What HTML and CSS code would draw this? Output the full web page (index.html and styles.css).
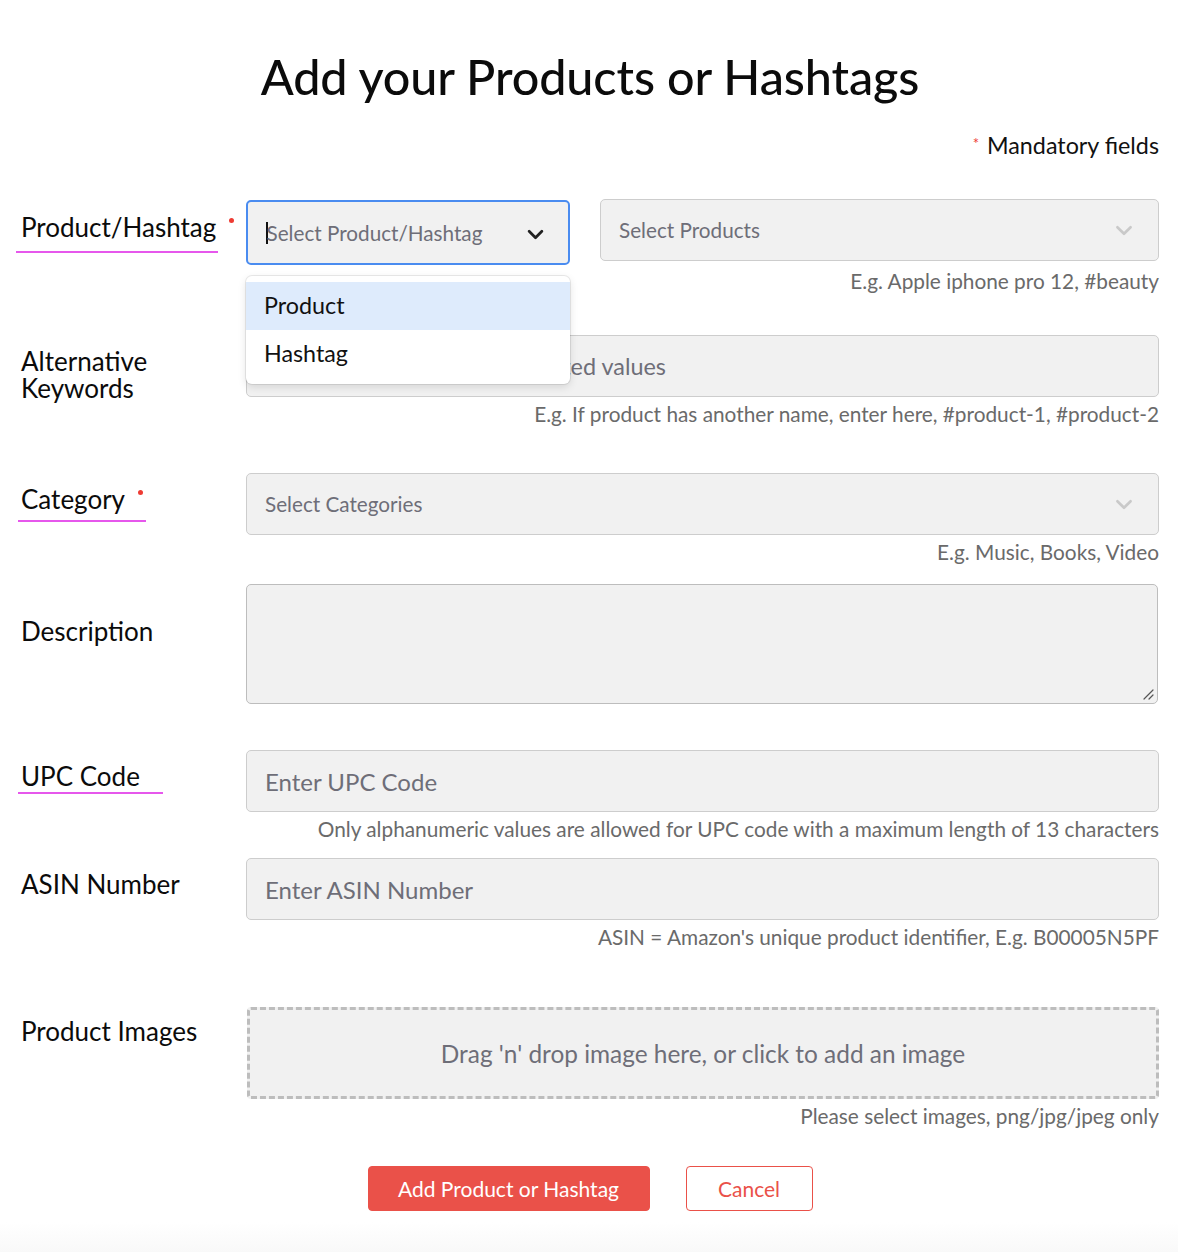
FILE: index.html
```html
<!DOCTYPE html>
<html lang="en">
<head>
<meta charset="utf-8">
<title>Add your Products or Hashtags</title>
<link rel="stylesheet" href="styles.css">
</head>
<body>
<main class="page">
  <h1 class="title">Add your Products or Hashtags</h1>
  <p class="mandatory"><span class="star">*</span> Mandatory fields</p>

  <div class="row row-product">
    <div class="label"><span class="lbl lbl-product">Product/Hashtag<i class="dot"></i></span></div>
    <div class="field">
      <div class="pair">
        <div class="select-wrap">
          <div class="select focused">
            <span class="caret"></span><span class="ph">Select Product/Hashtag</span>
            <svg class="chev dark" viewBox="0 0 16 10" width="17" height="11"><path d="M2 2l6 6 6-6" fill="none" stroke="#222" stroke-width="2.6" stroke-linecap="round" stroke-linejoin="round"/></svg>
          </div>
          <ul class="menu">
            <li class="opt active">Product</li>
            <li class="opt">Hashtag</li>
          </ul>
        </div>
        <div class="select second">
          <span class="ph">Select Products</span>
          <svg class="chev" viewBox="0 0 16 10" width="18" height="11"><path d="M2 2l6 6 6-6" fill="none" stroke="#c9c9c9" stroke-width="2.4" stroke-linecap="round" stroke-linejoin="round"/></svg>
        </div>
      </div>
      <p class="hint hint-first">E.g. Apple iphone pro 12, #beauty</p>
    </div>
  </div>

  <div class="row row-alt">
    <div class="label"><span class="lbl two-line">Alternative<br>Keywords</span></div>
    <div class="field">
      <div class="input"><span class="ph big alt">Enter multiple comma separated values</span></div>
      <p class="hint">E.g. If product has another name, enter here, #product-1, #product-2</p>
    </div>
  </div>

  <div class="row row-cat">
    <div class="label"><span class="lbl lbl-cat">Category<i class="dot"></i></span></div>
    <div class="field">
      <div class="select">
        <span class="ph">Select Categories</span>
        <svg class="chev" viewBox="0 0 16 10" width="18" height="11"><path d="M2 2l6 6 6-6" fill="none" stroke="#c9c9c9" stroke-width="2.4" stroke-linecap="round" stroke-linejoin="round"/></svg>
      </div>
      <p class="hint">E.g. Music, Books, Video</p>
    </div>
  </div>

  <div class="row row-desc">
    <div class="label"><span class="lbl">Description</span></div>
    <div class="field">
      <div class="textarea">
        <svg class="grip" viewBox="0 0 12 12" width="12" height="12"><path d="M11 2L2 11M11 7L7 11" stroke="#555" stroke-width="1.2" stroke-linecap="round"/></svg>
      </div>
    </div>
  </div>

  <div class="row row-upc">
    <div class="label"><span class="lbl lbl-upc">UPC Code</span></div>
    <div class="field">
      <div class="input"><span class="ph big">Enter UPC Code</span></div>
      <p class="hint">Only alphanumeric values are allowed for UPC code with a maximum length of 13 characters</p>
    </div>
  </div>

  <div class="row row-asin">
    <div class="label"><span class="lbl">ASIN Number</span></div>
    <div class="field">
      <div class="input"><span class="ph big">Enter ASIN Number</span></div>
      <p class="hint">ASIN = Amazon's unique product identifier, E.g. B00005N5PF</p>
    </div>
  </div>

  <div class="row row-img">
    <div class="label"><span class="lbl">Product Images</span></div>
    <div class="field">
      <div class="drop"><span class="drop-text">Drag 'n' drop image here, or click to add an image</span></div>
      <p class="hint">Please select images, png/jpg/jpeg only</p>
    </div>
  </div>

  <div class="actions">
    <button class="btn primary">Add Product or Hashtag</button>
    <button class="btn ghost">Cancel</button>
  </div>
</main>
<div class="bottom-fade"></div>
</body>
</html>
```

FILE: styles.css
```css
* { box-sizing: border-box; }
html, body { margin: 0; padding: 0; background: #fff; }
body {
  font-family: "Lato", "Liberation Sans", sans-serif;
  color: #111;
  width: 1178px;
  height: 1252px;
  overflow: hidden;
  position: relative;
}
.page {
  padding: 48px 19px 0 21px;
}
.title {
  margin: 0;
  text-align: center;
  font-size: 48.5px;
  font-weight: 500;
  line-height: 56px;
  letter-spacing: -0.1px;
  color: #0b0b0b;
}
.mandatory {
  margin: 25px 0 0;
  text-align: right;
  font-size: 23.3px;
  line-height: 28px;
}
.star {
  color: #ee3b33;
  font-size: 15px;
  vertical-align: 5px;
  margin-right: 2px;
}
.row {
  display: grid;
  grid-template-columns: 225px 1fr;
}
.row-product { margin-top: 40px; }
.row-alt { margin-top: 44px; }
.row-cat { margin-top: 49px; }
.row-desc { margin-top: 22px; }
.row-upc { margin-top: 46px; }
.row-asin { margin-top: 19px; }
.row-img { margin-top: 60px; }

.label { font-size: 26px; line-height: 30px; padding-top: 11px; }
.row-product .label { padding-top: 13px; }
.row-alt .label { padding-top: 13px; }
.row-desc .label { padding-top: 32px; }
.row-img .label { padding-top: 9px; }
.lbl {
  display: inline-block;
  position: relative;
  color: #0b0b0b;
  white-space: nowrap;
}
.lbl.two-line { line-height: 27px; }
.lbl-product, .lbl-cat, .lbl-upc {
  border-bottom: 2px solid #e657ec;
}
.lbl-product { width: 202px; margin-left: -5px; padding-left: 5px; padding-bottom: 9px; }
.lbl-cat { width: 128px; margin-left: -3px; padding-left: 3px; padding-bottom: 6px; }
.lbl-upc { width: 145px; margin-left: -3px; padding-left: 3px; padding-bottom: 1px; }
.dot {
  position: absolute;
  width: 5px;
  height: 5px;
  border-radius: 50%;
  background: #ee3b33;
  top: 6px;
}
.lbl-product .dot { left: 213px; }
.lbl-cat .dot { left: 120px; }

.field { min-width: 0; }
.pair {
  display: grid;
  grid-template-columns: 324px 1fr;
  column-gap: 30px;
  align-items: start;
}
.select-wrap { position: relative; }
.select, .input {
  position: relative;
  height: 62px;
  background: #f1f1f1;
  border: 1px solid #cdcdcd;
  border-radius: 5px;
  display: flex;
  align-items: center;
  padding: 0 18px;
  overflow: hidden;
}
.select.focused {
  height: 65px;
  border: 2px solid #4a8cf0;
  padding-left: 18px;
  margin-top: 1px;
}
.select.second { height: 62px; }
.ph {
  font-size: 20.7px;
  color: #6e6e78;
  white-space: nowrap;
}
.ph.big { font-size: 24px; }
.ph.big.alt { font-size: 23.4px; }
.caret {
  display: inline-block;
  width: 1.5px;
  height: 22px;
  background: #111;
  margin-right: -1px;
}
.chev {
  position: absolute;
  right: 25px;
  top: 50%;
  margin-top: -5px;
}
.chev.dark { right: 24px; margin-top: -4px; }

.menu {
  position: absolute;
  left: 0;
  top: 77px;
  width: 324px;
  margin: 0;
  padding: 6px 0;
  list-style: none;
  background: #fff;
  border-radius: 6px;
  box-shadow: 0 0 0 1px rgba(0,0,0,0.08), 0 3px 8px rgba(0,0,0,0.12);
  z-index: 5;
}
.opt {
  height: 48px;
  line-height: 47px;
  padding-left: 18px;
  font-size: 23.3px;
  color: #111;
}
.opt.active { background: #deebfc; }

.hint {
  margin: 7px 0 0;
  text-align: right;
  font-size: 20.8px;
  line-height: 20px;
  color: #6a6a6a;
}
.hint-first { margin-top: 6px; }

.textarea {
  position: relative;
  height: 120px;
  background: #f1f1f1;
  border: 1px solid #bdbdbd;
  border-radius: 5px;
  margin-right: 1px;
}
.grip { position: absolute; right: 3px; bottom: 3px; }

.drop {
  height: 92px;
  background: #f1f1f1;
  border: 3px dashed #bdbdbd;
  border-radius: 4px;
  display: flex;
  align-items: center;
  justify-content: center;
  margin-left: 1px;
}
.drop-text { font-size: 24.4px; color: #6e6e78; }

.actions {
  display: flex;
  justify-content: center;
  gap: 36px;
  margin-top: 40px;
}
.btn {
  height: 45px;
  border-radius: 4px;
  font-family: inherit;
  font-size: 21px;
  cursor: pointer;
}
.btn.primary {
  width: 282px;
  background: #ea5149;
  border: 1px solid #ea5149;
  color: #fff;
}
.btn.ghost {
  width: 127px;
  background: #fff;
  border: 1px solid #ea5149;
  color: #ea5149;
}
.bottom-fade {
  position: absolute;
  left: 0;
  right: 0;
  bottom: 0;
  height: 30px;
  background: linear-gradient(#fff, #f9f9f9);
}
```
